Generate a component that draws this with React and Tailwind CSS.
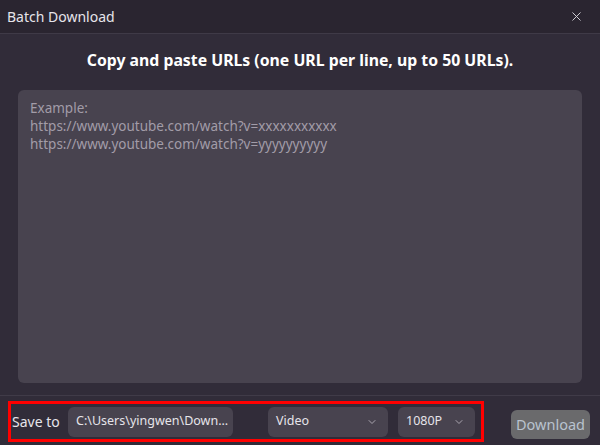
import { X, ChevronDown } from "lucide-react";

/*
 * BatchDownload
 * -------------
 * Modal for pasting a list of URLs and choosing where/how to save them.
 */

function Select({ label, className }) {
  return (
    <div
      className={`flex h-[30px] items-center justify-between rounded-md bg-[#48434f] pl-2 pr-2.5 text-[12.5px] text-[#e6e4ea] ${className}`}
    >
      <span>{label}</span>
      <ChevronDown className="size-3 text-[#a9a4ae]" strokeWidth={2} aria-hidden="true" />
    </div>
  );
}

export default function App() {
  return (
    <div
      className="flex h-[445px] w-[600px] flex-col bg-[#312c39] text-[#e6e4ea]"
      style={{ fontFamily: '"Noto Sans", "Open Sans", sans-serif' }}
    >
      <div className="flex h-[34px] shrink-0 items-center justify-between border-b border-[#3f3a47] bg-[#2a2530] pl-[7px] pr-4">
        <span className="text-[14px]">Batch Download</span>
        <X className="size-[15px] text-[#d8d6dc]" strokeWidth={1.5} aria-hidden="true" />
      </div>

      <div className="flex flex-1 flex-col px-[18px] pb-3">
        <h1 className="pt-[15px] text-center text-[15.8px] font-bold leading-[22px] text-white">
          Copy and paste URLs (one URL per line, up to 50 URLs).
        </h1>
        <div className="mt-[19px] flex-1 rounded-md bg-[#48434f] px-3 py-[9px] text-[13.5px] leading-[18px] text-[#a29ca8]">
          <p>Example:</p>
          <p>https://www.youtube.com/watch?v=xxxxxxxxxxx</p>
          <p>https://www.youtube.com/watch?v=yyyyyyyyyy</p>
        </div>
      </div>

      <div className="flex h-[50px] shrink-0 items-start border-t border-[#403b48] pl-2 pr-[10px] pt-[5px]">
        <div className="flex h-[41px] w-[476px] items-center border-[3px] border-[#ff0000] pl-[1px]">
          <span className="w-[56px] text-[14px]">Save to</span>
          <div className="flex h-[30px] w-[165px] items-center rounded-md bg-[#48434f] px-2 text-[12.5px]">
            C:\Users\yingwen\Down...
          </div>
          <Select label="Video" className="ml-[35px] w-[120px]" />
          <Select label="1080P" className="ml-[10px] w-[77px]" />
        </div>
        <button
          type="button"
          className="ml-auto mt-[9px] h-[29px] w-[79px] rounded-md bg-[#6a6a6c] text-[14.5px] text-[#b9c3cf]"
        >
          Download
        </button>
      </div>
    </div>
  );
}
